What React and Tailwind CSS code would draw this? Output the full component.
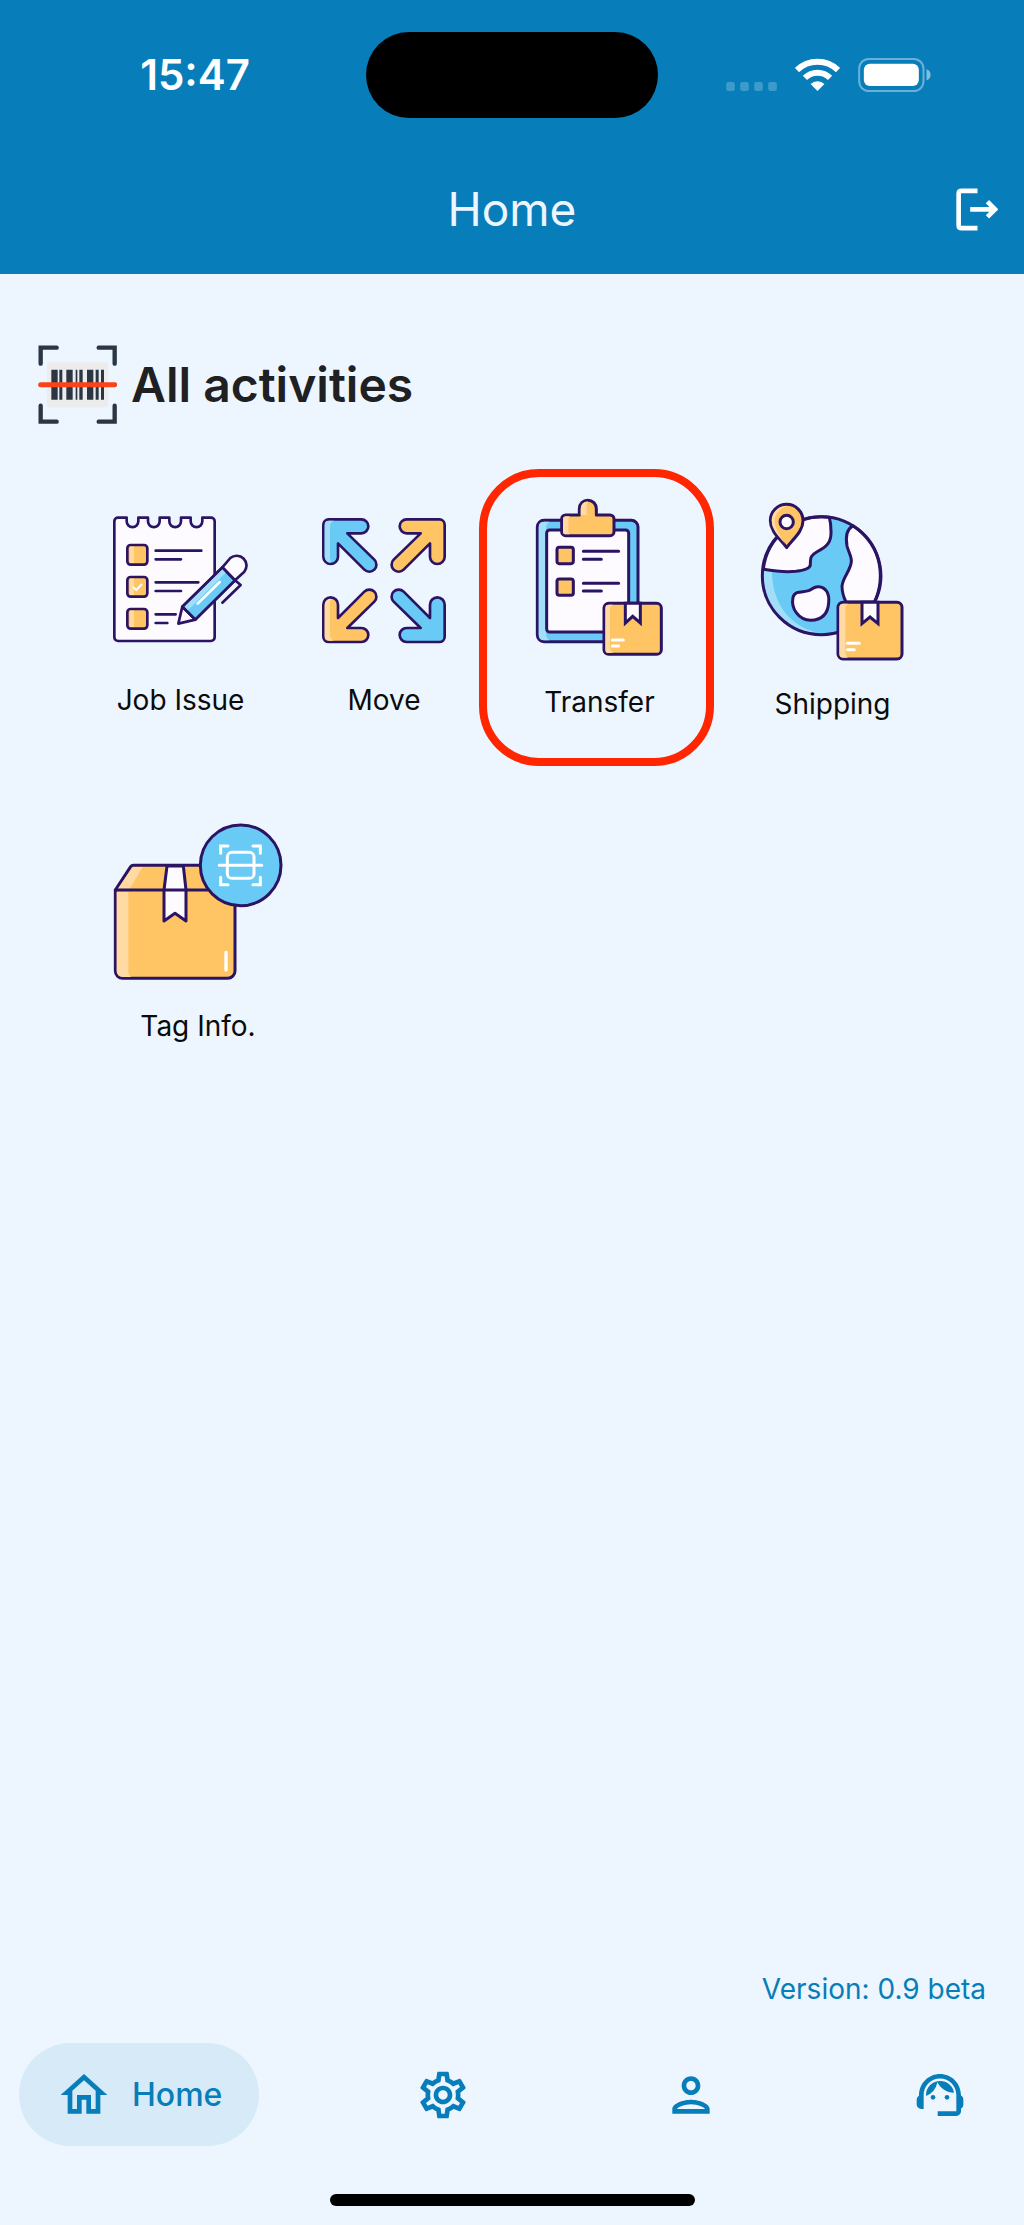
import React, { useState } from "react";
import {
  MdOutlineHome,
  MdOutlineSettings,
  MdOutlinePerson,
  MdOutlineSupportAgent
} from "react-icons/md";

const INK = "#2b1464";
const PAPER = "#fdfbff";
const BLUE = "#69cbf5";
const BLUE_LIGHT = "#a3def8";
const ORANGE = "#ffc463";
const ORANGE_LIGHT = "#ffdba3";

const NAV_ITEMS = [
  { id: "home", label: "Home", icon: MdOutlineHome },
  { id: "settings", label: "Settings", icon: MdOutlineSettings },
  { id: "profile", label: "Profile", icon: MdOutlinePerson },
  { id: "support", label: "Support", icon: MdOutlineSupportAgent }
];

function JobIssueIcon() {
  return (
    <svg viewBox="69 0 405 522" className="w-[135px] h-[174px]" fill="none" stroke={INK} strokeWidth="8" strokeLinecap="round" strokeLinejoin="round" aria-hidden="true">
      <path
        d="M84 83H110V94a17.500 17.500 0 0 0 35 0V83H174V94a17.500 17.500 0 0 0 35 0V83H238V94a17.500 17.500 0 0 0 35 0V83H302V94a17.500 17.500 0 0 0 35 0V83H363a11 11 0 0 1 11 11V442a11 11 0 0 1-11 11H84a11 11 0 0 1-11-11V94a11 11 0 0 1 11-11Z"
        fill={PAPER}
      />
      {[165, 261, 357].map((y) => (
        <g key={y}>
          <rect x="112" y={y} width="60" height="59" rx="10" fill={ORANGE} />
          <path d={`M119 ${y + 5}h13v49h-13z`} fill={ORANGE_LIGHT} stroke="none" />
        </g>
      ))}
      <path d="M129 291l10 9 17-18" stroke="#fff" strokeWidth="6" strokeLinecap="butt" strokeLinejoin="miter" />
      <path d="M197 182H334M197 208H273M197 277H325M197 303H273M197 373H257M197 399H232" />
      <path d="M277 350L265 401L316 389Z" fill={PAPER} />
      <path d="M397 232L421 204A29.500 29.500 0 0 1 463 245L435 271Z" fill={PAPER} />
      <path d="M397 232L435 271L316 389L277 350Z" fill={BLUE} />
      <path d="M397 238L407 248L294 361L284 350Z" fill={BLUE_LIGHT} stroke="none" />
      <path d="M389 276L323 341" stroke="#fff" />
      <path d="M397 232L435 271L316 389L277 350Z" />
      <path d="M435 271L452 285L397 338" />
    </svg>
  );
}

const ARROW = "M86 88H184A21 21 0 0 1 184 130H142L223 209A21 21 0 0 1 193 239L114 160V200A22 22 0 0 1 70 200V104A16 16 0 0 1 86 88Z";

function MoveIcon() {
  return (
    <svg viewBox="66 0 372 522" className="w-[124px] h-[174px]" fill="none" stroke={INK} strokeWidth="8" strokeLinejoin="round" aria-hidden="true">
      <path d={ARROW} fill={BLUE} />
      <path d="M103 92H88Q74 92 74 105V200Q76 217 92 218Q90 208 90 200V110Q90 94 103 92Z" fill={BLUE_LIGHT} stroke="none" />
      <path d={ARROW} fill={ORANGE} transform="translate(504 0) scale(-1 1)" />
      <path d={ARROW} fill={BLUE} transform="translate(504 544) scale(-1 -1)" />
      <g transform="translate(0 544) scale(1 -1)">
        <path d={ARROW} fill={ORANGE} />
        <path d="M103 92H88Q74 92 74 105V200Q76 217 92 218Q90 208 90 200V110Q90 94 103 92Z" fill={ORANGE_LIGHT} stroke="none" />
      </g>
    </svg>
  );
}

function TransferIcon() {
  return (
    <svg viewBox="150 90 477 528" className="w-[159px] h-[176px]" fill="none" stroke={INK} strokeWidth="9" strokeLinecap="round" strokeLinejoin="round" aria-hidden="true">
      <rect x="202" y="181" width="302" height="364" rx="20" fill={BLUE} />
      <path d="M238 185H222Q206 185 206 201V525Q206 541 222 541H238Q228 534 228 522V204Q228 192 238 185Z" fill={BLUE_LIGHT} stroke="none" />
      <rect x="230" y="210" width="246" height="306" rx="9" fill={PAPER} />
      <path d="M287 165H328V146A25 25 0 0 1 379 146V165H420A12 12 0 0 1 432 177V215A12 12 0 0 1 420 227H287A12 12 0 0 1 275 215V177A12 12 0 0 1 287 165Z" fill={ORANGE} />
      <path d="M300 169H287Q279 169 279 177V215Q279 223 287 223H300Q295 220 295 213V179Q295 172 300 169ZM354 124Q332 126 332 148V165H350V148Q348 132 354 124Z" fill={ORANGE_LIGHT} stroke="none" />
      <rect x="261" y="262" width="49" height="49" rx="7" fill={ORANGE} />
      <rect x="261" y="357" width="49" height="49" rx="7" fill={ORANGE} />
      <path d="M340 274H446M340 298H394M340 370H446M340 393H394" />
      <rect x="402" y="430" width="172" height="153" rx="14" fill={ORANGE} />
      <path d="M430 434H416Q406 434 406 444V569Q406 579 416 579H430Q420 574 420 564V448Q420 438 430 434Z" fill={ORANGE_LIGHT} stroke="none" />
      <path d="M466 430V489L488 469L511 489V430Z" fill={PAPER} strokeLinejoin="miter" />
      <path d="M427 540H460M427 558H446" stroke="#fff" />
    </svg>
  );
}

function ShippingIcon() {
  return (
    <svg viewBox="39 0 477 534" className="w-[159px] h-[178px]" fill="none" stroke={INK} strokeWidth="9" strokeLinecap="round" strokeLinejoin="round" aria-hidden="true">
      <circle cx="244" cy="257" r="177" fill={BLUE} stroke="none" />
      <path d="M71 240Q94 244 96 244C96 340 150 415 244 430A173 173 0 0 1 71 240Z" fill={BLUE_LIGHT} stroke="none" />
      <path d="M70 238Q130 248 168 244Q211 238 211 224C211 200 213 196 230 186C262 170 274 156 273 125Q273 100 268 82A177 177 0 0 0 70 238Z" fill={PAPER} />
      <path d="M339 107C320 118 316 140 321 168C325 186 335 198 334 214C333 240 308 262 306 288Q306 312 318 336H404A177 177 0 0 0 339 107Z" fill={PAPER} />
      <path d="M159 322C165 300 190 308 206 302C218 298 220 289 236 290C258 291 269 312 266 338C264 372 246 390 212 391C176 390 152 356 159 322Z" fill={PAPER} />
      <circle cx="244" cy="257" r="177" />
      <path d="M140 173C120 146 91 124 91 92A49 49 0 0 1 189 92C189 124 160 146 140 173Z" fill={ORANGE} />
      <path d="M142 48C112 48 95 70 95 92C95 118 116 138 136 162Q104 118 104 92Q106 60 142 48Z" fill={ORANGE_LIGHT} stroke="none" />
      <circle cx="140" cy="96" r="20" fill={PAPER} />
      <rect x="294" y="337" width="192" height="170" rx="15" fill={ORANGE} />
      <path d="M324 341H310Q298 341 298 353V491Q298 503 310 503H324Q316 498 316 488V356Q316 345 324 341Z" fill={ORANGE_LIGHT} stroke="none" />
      <path d="M366 337V401L390 381L414 401V337Z" fill={PAPER} strokeLinejoin="miter" />
      <path d="M322 460H358M322 479H343" stroke="#fff" />
    </svg>
  );
}

function TagInfoIcon() {
  return (
    <svg viewBox="69 48 510 522" className="w-[170px] h-[174px]" fill="none" stroke={INK} strokeWidth="9" strokeLinecap="round" strokeLinejoin="round" aria-hidden="true">
      <path d="M76 270L122 200Q125 196 130 196H385L435 270V513A22 22 0 0 1 413 535H98A22 22 0 0 1 76 513Z" fill={ORANGE} />
      <path d="M128 201H158L119 266H84ZM80 275H115V516Q115 525 124 531H98Q80 530 80 513Z" fill={ORANGE_LIGHT} stroke="none" />
      <path d="M231 198L222 270V363L255 340L288 363V270L280 198Z" fill={PAPER} />
      <path d="M76 270H435" />
      <path d="M408 457V510" stroke="#fff" strokeWidth="10" />
      <circle cx="452" cy="196" r="121" fill={BLUE} />
      <g stroke="#fff" strokeWidth="9">
        <rect x="412" y="157" width="80" height="78" rx="14" />
        <path d="M388 196H515" />
        <path d="M392 160V138H414M489 138H511V160M392 232V254H414M489 254H511V232" strokeLinejoin="miter" />
      </g>
    </svg>
  );
}

function BarcodeIcon() {
  return (
    <svg viewBox="55 46 237 237" className="w-[79px] h-[79px]" fill="none" aria-hidden="true">
      <rect x="82" y="98" width="184" height="135" rx="6" fill="#ececec" />
      <path
        d="M95 120h19v90h-19zM119 120h9v90h-9zM140 120h19v90h-19zM168 120h5v90h-5zM179 120h10v90h-10zM202 120h19v90h-19zM228 120h9v90h-9zM244 120h9v90h-9z"
        fill="#2b3644"
      />
      <path d="M63 102V54H111M237 54H285V102M63 228V276H111M237 276H285V228" stroke="#2b3644" strokeWidth="13" strokeLinecap="round" />
      <path d="M63 165H285" stroke="#fb4218" strokeWidth="15" strokeLinecap="round" />
    </svg>
  );
}

const ACTIVITIES = [
  { id: "job-issue", name: "Job Issue", icon: JobIssueIcon },
  { id: "move", name: "Move", icon: MoveIcon },
  { id: "transfer", name: "Transfer", icon: TransferIcon, highlighted: true },
  { id: "shipping", name: "Shipping", icon: ShippingIcon },
  { id: "tag-info", name: "Tag Info.", icon: TagInfoIcon }
];

function StatusBar() {
  return (
    <div className="grid grid-cols-[1fr_auto_1fr] items-center pt-8">
      <span className="justify-self-center pl-6 text-[42px] leading-[48px] font-semibold">15:47</span>
      <div className="w-[292px] h-[86px] rounded-full bg-black" />
      <div className="flex items-center justify-center gap-[18px] pr-[26px]">
        <svg viewBox="80 84 152 102" className="w-[51px] h-[34px]" fill="#3d9aca" aria-hidden="true">
          {[80, 122, 164, 206].map((x) => (
            <rect key={x} x={x} y="156" width="26" height="27" rx="7" />
          ))}
        </svg>
        {/* Wi-Fi */}
        <svg viewBox="284 84 136 102" className="w-[45px] h-[34px]" fill="none" stroke="#fff" strokeWidth="18" aria-hidden="true">
          <path d="M290 120A89 89 0 0 1 414 120M314 144A54 54 0 0 1 390 144" />
          <path d="M352 183L331 162A31 31 0 0 1 373 162Z" fill="#fff" stroke="none" />
        </svg>
        {/* Battery */}
        <svg viewBox="471 84 218 102" className="w-[73px] h-[34px]" fill="none" aria-hidden="true">
          <rect x="474" y="87" width="193" height="96" rx="29" stroke="#6bb1d7" strokeWidth="6" />
          <rect x="488" y="101" width="165" height="67" rx="18" fill="#fff" />
          <path d="M676 118Q688 122 688 134Q688 147 676 151Z" fill="#83bedd" />
        </svg>
      </div>
    </div>
  );
}

export default function App() {
  const [activeTab, setActiveTab] = useState("home");

  return (
    <div className="min-h-screen flex flex-col bg-[#edf6ff] font-['Inter',sans-serif]">
      <header className="bg-[#077dba] text-white">
        <StatusBar />
        <div className="grid grid-cols-[1fr_auto_1fr] items-center pt-[26px] pr-[26px] pl-[26px] h-[156px]">
          <span />
          <h1 className="text-[46px] leading-[56px] text-[#edf6ff]">Home</h1>
          <button type="button" aria-label="Log out" className="justify-self-end">
            <svg viewBox="768 474 127 129" className="w-[42px] h-[43px]" fill="none" stroke="#fff" strokeWidth="14" aria-hidden="true">
              <path d="M833 482H785Q776 482 776 491V586Q776 595 785 595H833" />
              <path d="M811 538H884M863 515L886 538L863 561" />
            </svg>
          </button>
        </div>
      </header>

      <main className="flex-1 pt-[71px]">
        <div className="flex items-center gap-[14px] pl-[38px]">
          <BarcodeIcon />
          <h2 className="text-[48px] leading-[56px] font-semibold text-[#1f2021]">All activities</h2>
        </div>

        <div className="flex flex-wrap items-start gap-x-[74px] gap-y-[92px] mt-[66px] pl-[113px] pr-10">
          {ACTIVITIES.map((activity) => {
            const Icon = activity.icon;
            return (
              <button key={activity.id} type="button" className="relative flex flex-col items-center gap-4">
                <Icon />
                <span className="text-[28px] leading-10 text-[#0b0b0b] whitespace-nowrap">{activity.name}</span>
                {activity.highlighted && (
                  <span className="absolute -top-[21px] -bottom-11 -left-[41px] -right-[35px] border-8 border-[#ff2600] rounded-[60px]" />
                )}
              </button>
            );
          })}
        </div>
      </main>

      <footer>
        <p className="px-[38px] text-right text-[28px] leading-10 text-[#077dba]">Version: 0.9 beta</p>
        <nav className="flex items-center justify-between mt-[34px] px-[19px] text-[#077dba]">
          {NAV_ITEMS.map((item) => {
            const Icon = item.icon;
            const isActive = activeTab === item.id;
            return (
              <button
                key={item.id}
                type="button"
                aria-label={item.label}
                onClick={() => setActiveTab(item.id)}
                className={`flex items-center gap-5 h-[103px] px-[37px] rounded-full ${isActive ? "bg-[#d6eaf7]" : ""}`}
              >
                <Icon className="size-14" />
                {isActive && <span className="text-[32px] leading-10 font-medium">{item.label}</span>}
              </button>
            );
          })}
        </nav>
        <div className="w-[365px] h-3 mx-auto mt-12 mb-[19px] rounded-full bg-black" />
      </footer>
    </div>
  );
}
